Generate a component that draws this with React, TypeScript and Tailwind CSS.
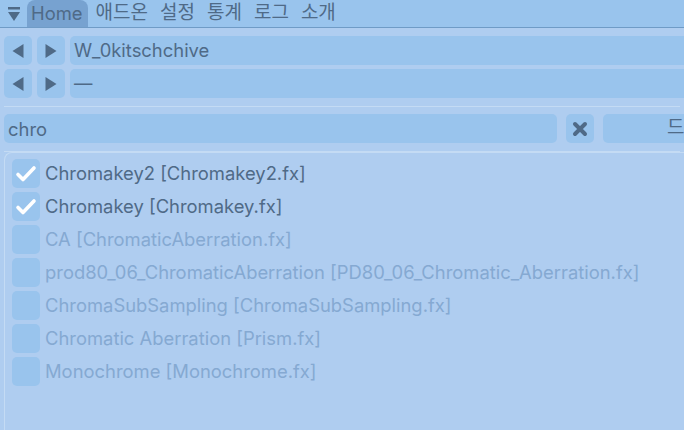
import { useState } from 'react';

const font = { fontFamily: 'Inter, "Noto Sans CJK KR", sans-serif' };

const effects = [
  { name: 'Chromakey2 [Chromakey2.fx]', on: true },
  { name: 'Chromakey [Chromakey.fx]', on: true },
  { name: 'CA [ChromaticAberration.fx]', on: false },
  { name: 'prod80_06_ChromaticAberration [PD80_06_Chromatic_Aberration.fx]', on: false },
  { name: 'ChromaSubSampling [ChromaSubSampling.fx]', on: false },
  { name: 'Chromatic Aberration [Prism.fx]', on: false },
  { name: 'Monochrome [Monochrome.fx]', on: false },
];

const ArrowButton = ({ dir }: { dir: 'left' | 'right' }) => (
  <div className="w-[28px] h-[29px] shrink-0 rounded-[5px] bg-[#99c4ed] flex items-center justify-center">
    <svg width="12" height="16" viewBox="0 0 12 16">
      {dir === 'left' ? (
        <polygon points="11.5,1 11.5,15 0.5,8" fill="#4f6a87" />
      ) : (
        <polygon points="0.5,1 0.5,15 11.5,8" fill="#4f6a87" />
      )}
    </svg>
  </div>
);

const PathRow = ({ value }: { value: string }) => (
  <div className="flex items-center gap-[5px] h-[29px]">
    <ArrowButton dir="left" />
    <ArrowButton dir="right" />
    <div className="flex-1 h-full rounded-l-[5px] bg-[#99c4ed] text-[#4f6a87] text-[18.4px] flex items-center px-[4px]">
      {value}
    </div>
  </div>
);

const App = () => {
  const [search, setSearch] = useState('chro');
  const menus = ['애드온', '설정', '통계', '로그', '소개'];

  return (
    <div className="w-[684px] h-[430px] overflow-hidden bg-[#afcdf0] text-[#4f6a87]" style={font}>
      {/* Menu bar */}
      <div className="h-[28px] bg-[#99c4ed] border-b border-[#6f9bc6] flex items-end">
        <div className="w-[27px] h-full flex items-center justify-center">
          <svg width="14" height="18" viewBox="0 0 14 18">
            <rect x="1" y="2" width="12" height="2.5" fill="#4f6a87" />
            <polygon points="1,7 13,7 7,16" fill="#4f6a87" />
          </svg>
        </div>
        <div className="h-full flex items-center text-[18.4px] pl-[4px] pr-[5px] mr-[4px] bg-[#77a2d0] rounded-t-[8px]">
          Home
        </div>
        {menus.map((m) => (
          <div key={m} className="h-full flex items-center text-[19px] px-[4px] mr-[4px]">
            {m}
          </div>
        ))}
      </div>

      {/* Path rows */}
      <div className="pl-[4px] pt-[8px] flex flex-col gap-[4px]">
        <PathRow value="W_0kitschchive" />
        <PathRow value="—" />
      </div>

      <div className="mx-[4px] mt-[8px] border-t border-[#c4dbf4]" />

      {/* Search row */}
      <div className="pl-[4px] mt-[7px] flex items-center gap-[9px] h-[29px]">
        <input
          value={search}
          onChange={(e) => setSearch(e.target.value)}
          className="w-[553px] h-full rounded-[5px] bg-[#99c4ed] text-[18.4px] px-[4px] outline-none text-[#4f6a87]"
          style={font}
        />
        <div className="w-[28px] h-full rounded-[5px] bg-[#99c4ed] flex items-center justify-center">
          <svg width="16" height="16" viewBox="0 0 16 16">
            <path d="M3 3 L13 13 M13 3 L3 13" stroke="#4f6a87" strokeWidth="4" strokeLinecap="round" />
          </svg>
        </div>
        <div className="flex-1 h-full rounded-l-[5px] bg-[#99c4ed] flex items-center overflow-hidden text-[19px] pl-[64px]">
          <span className="whitespace-nowrap">드</span>
        </div>
      </div>

      <div className="mx-[4px] mt-[8px] border-t border-[#c4dbf4]" />

      {/* Effect list */}
      <div className="ml-[4px] h-[300px] border-l border-t border-[#c4dbf4] rounded-tl-[8px] pt-[6px] pl-[7px] flex flex-col gap-[4px]">
        {effects.map((e) => (
          <div key={e.name} className="flex items-center gap-[5px] h-[29px] whitespace-nowrap">
            <div className="w-[28px] h-[29px] shrink-0 rounded-[5px] bg-[#99c4ed] flex items-center justify-center">
              {e.on && (
                <svg width="22" height="20" viewBox="0 0 22 20">
                  <path d="M3 10.5 L8 15.5 L19 4" stroke="#ffffff" strokeWidth="3.6" fill="none" strokeLinecap="round" strokeLinejoin="round" />
                </svg>
              )}
            </div>
            <span className={'text-[18.4px] ' + (e.on ? 'text-[#4f6a87]' : 'text-[#85a9d2]')}>{e.name}</span>
          </div>
        ))}
      </div>
    </div>
  );
};

export default App;
